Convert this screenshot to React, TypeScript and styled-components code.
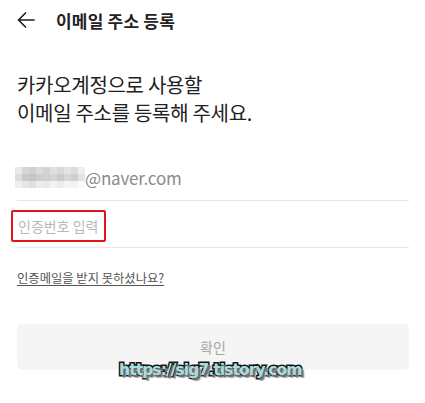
import React from "react";
import styled, { createGlobalStyle } from "styled-components";

const GlobalStyle = createGlobalStyle`
  html, body {
    margin: 0;
    padding: 0;
    background: #ffffff;
  }
  body {
    font-family: "Noto Sans CJK KR", "Noto Sans", sans-serif;
    color: #222222;
  }
`;

const Page = styled.div`
  position: relative;
  width: 425px;
  height: 403px;
  overflow: hidden;
  padding: 0 16px 0 17px;
  box-sizing: border-box;
`;

const Header = styled.div`
  height: 40px;
  display: flex;
  align-items: center;
`;

const BackButton = styled.button`
  border: 0;
  background: none;
  padding: 0;
  width: 39px;
  height: 40px;
  display: flex;
  align-items: center;
  color: #222;
`;

const Title = styled.h1`
  margin: 0;
  font-size: 17px;
  font-weight: 700;
  letter-spacing: 0.2px;
  color: #222;
`;

const Heading = styled.p`
  margin: 31px 0 0;
  font-size: 20px;
  line-height: 28px;
  font-weight: 400;
  letter-spacing: -0.3px;
  color: #222;
`;

const Field = styled.div<{ first?: boolean }>`
  margin-top: ${(p) => (p.first ? "27px" : "0")};
  height: 46px;
  border-bottom: 1px solid #e6e6e6;
  display: flex;
  align-items: center;
`;

const Blur = styled.div`
  display: grid;
  grid-template-columns: repeat(10, 7px);
  grid-template-rows: repeat(3, 7px);
  margin-left: -2px;
`;

const Pixel = styled.span<{ shade: string }>`
  background: ${(p) => p.shade};
`;

const EmailText = styled.span`
  font-size: 17px;
  letter-spacing: -0.2px;
  color: #8a8a8a;
`;

const CodeInput = styled.span`
  margin-top: 4px;
  margin-left: -6px;
  padding: 4px 6px 4px 5px;
  border: 2px solid #e0141a;
  border-radius: 2px;
  font-size: 14px;
  line-height: 20px;
  color: #b8b8b8;
`;

const HelpLink = styled.a`
  display: inline-block;
  margin-top: 21px;
  font-size: 12.3px;
  line-height: 18px;
  color: #555;
  text-decoration: underline;
  text-underline-offset: 2px;
`;

const ConfirmButton = styled.button`
  display: block;
  width: 100%;
  margin-top: 36px;
  height: 46px;
  border: 0;
  border-radius: 5px;
  background: #f5f5f5;
  font-family: inherit;
  font-size: 14px;
  color: #a6a6a6;
`;

const Watermark = styled.div`
  position: absolute;
  left: 119px;
  top: 361px;
  font-family: "DejaVu Sans", sans-serif;
  font-weight: 700;
  font-size: 15.5px;
  letter-spacing: -0.9px;
  color: #a9dede;
  -webkit-text-stroke: 3px #151515;
  paint-order: stroke fill;
  text-shadow: 2px 2px 0 #6f6f6f, 3px 3px 1px #a8a8a8;
`;

const shades = [
  "#e8e8e8", "#d6d6d6", "#cfcfcf", "#dadada", "#d2d2d2", "#e0e0e0", "#d9d9d9", "#e3e3e3", "#dcdcdc", "#eeeeee",
  "#dedede", "#c9c9c9", "#c6c6c6", "#cdcdcd", "#d0d0d0", "#d5d5d5", "#cbcbcb", "#d8d8d8", "#cfcfcf", "#e4e4e4",
  "#f0f0f0", "#e6e6e6", "#dfdfdf", "#ececec", "#e9e9e9", "#f2f2f2", "#ebebeb", "#f4f4f4", "#f3f3f3", "#fafafa",
];

export default function App() {
  return (
    <Page>
      <GlobalStyle />
      <Header>
        <BackButton aria-label="back">
          <svg width="18" height="16" viewBox="0 0 18 16" fill="none">
            <path d="M17 8H1.5M8.5 1L1.5 8l7 7" stroke="#222" strokeWidth="1.7" strokeLinecap="round" strokeLinejoin="round" />
          </svg>
        </BackButton>
        <Title>이메일 주소 등록</Title>
      </Header>
      <Heading>
        카카오계정으로 사용할
        <br />
        이메일 주소를 등록해 주세요.
      </Heading>
      <Field first>
        <Blur>
          {shades.map((s, i) => (
            <Pixel key={i} shade={s} />
          ))}
        </Blur>
        <EmailText>@naver.com</EmailText>
      </Field>
      <Field>
        <CodeInput>인증번호 입력</CodeInput>
      </Field>
      <HelpLink href="#">인증메일을 받지 못하셨나요?</HelpLink>
      <ConfirmButton>확인</ConfirmButton>
      <Watermark>https://sig7.tistory.com</Watermark>
    </Page>
  );
}
